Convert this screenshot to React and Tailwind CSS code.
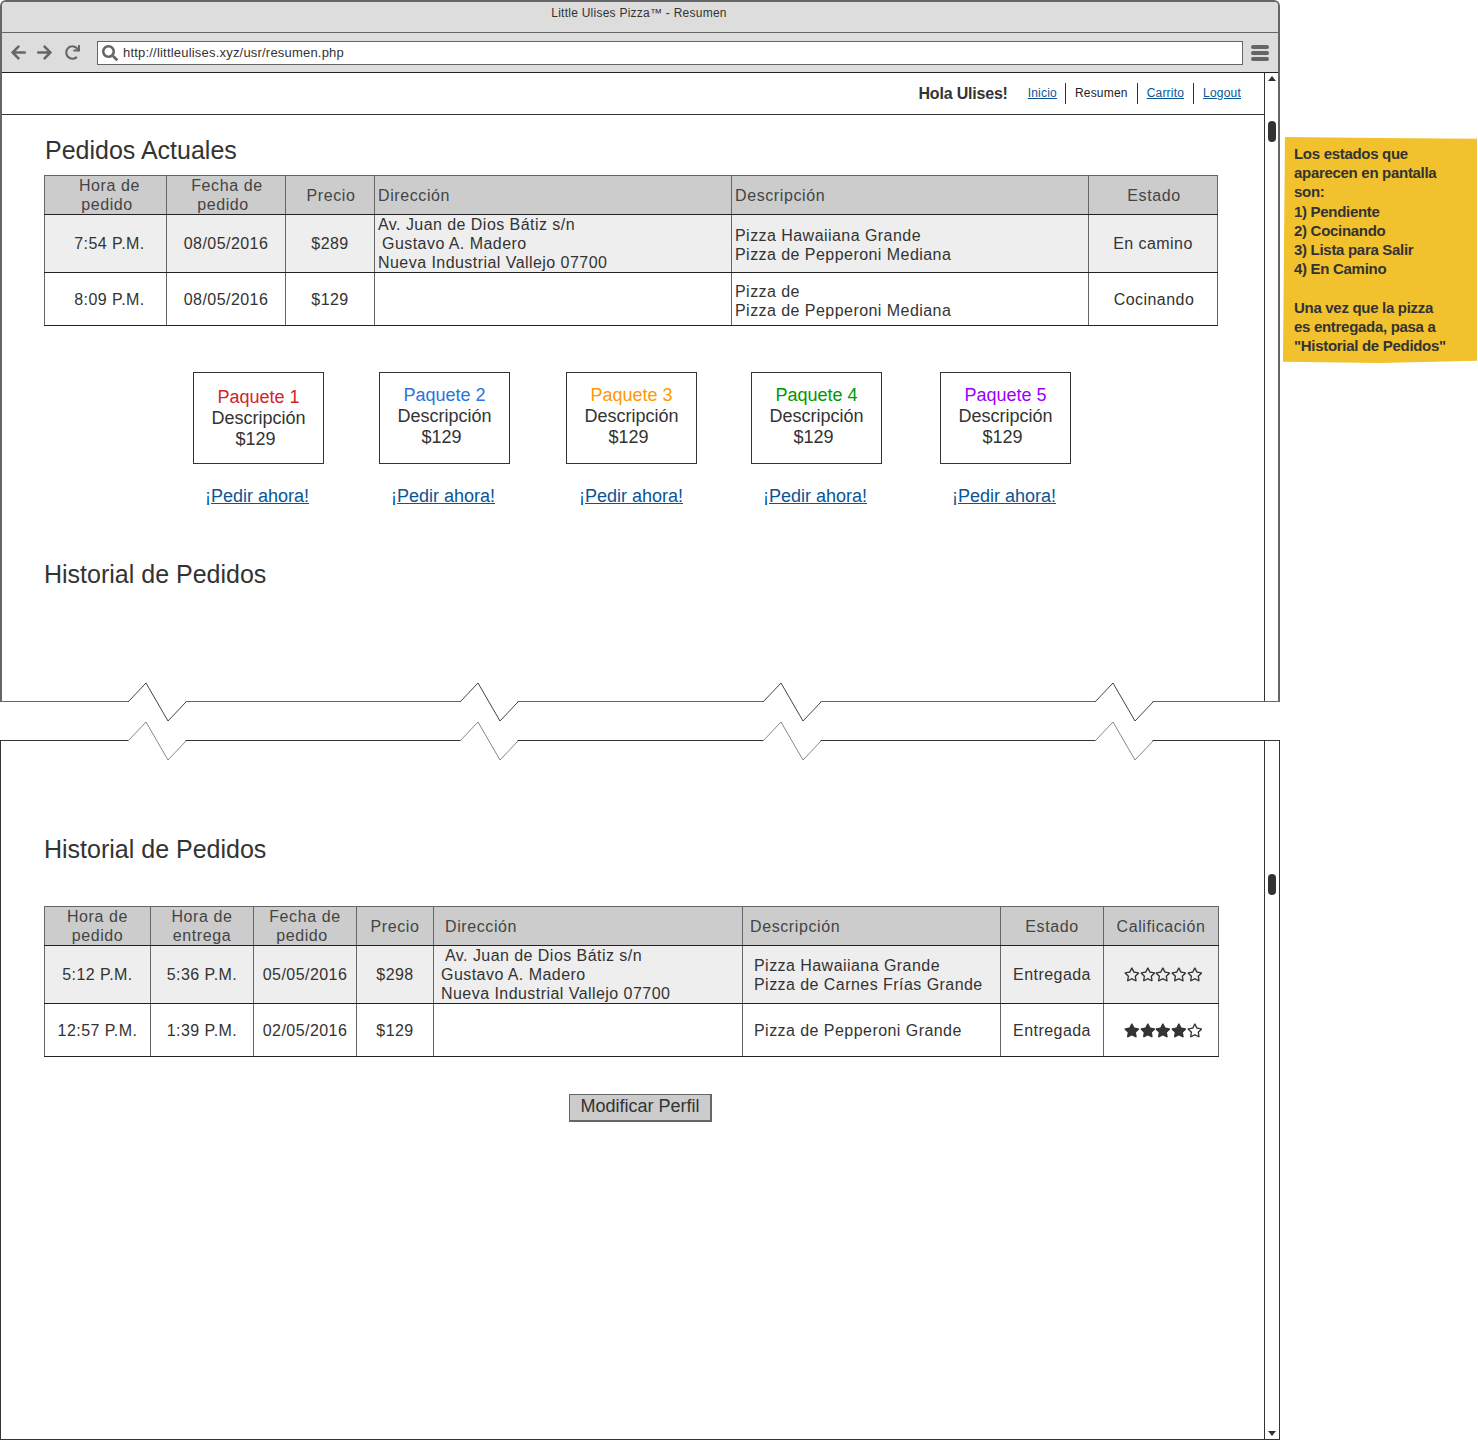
import React from "react";
import { FaArrowLeft, FaArrowRight, FaRedo, FaSearch, FaStar, FaRegStar } from "react-icons/fa";

const font = "font-['Liberation_Sans',Arial,sans-serif]";

function Th({ className = "", children }) {
  return <th className={"border border-[#666] border-b-[#222] bg-[#ccc] p-0 font-normal align-middle text-[16px] leading-[19px] tracking-[0.6px] text-[#444] " + className}>{children}</th>;
}
function Td({ className = "", children }) {
  return <td className={"border border-[#666] border-y-[#222] p-0 align-middle text-[16px] leading-[19px] tracking-[0.45px] text-[#333] " + className}>{children}</td>;
}
function Stars({ n }) {
  const list = [0, 1, 2, 3, 4];
  return (
    <div className="flex pl-[20px] text-[#333]">
      {list.map((i) => (i < n ? <FaStar key={i} className="w-[15.7px] h-[15px]" /> : <FaRegStar key={i} className="w-[15.7px] h-[15px]" />))}
    </div>
  );
}
function Pkg({ box, text, name, color, link }) {
  return (
    <div className={"flex flex-col w-[131px] " + box}>
      <div className={"h-[92px] border border-[#333] flex flex-col items-center text-[18px] leading-[21px] text-[#333] " + text}>
        <span className={color}>{name}</span>
        <span>Descripción</span>
        <span className="pr-[6px]">$129</span>
      </div>
      <a className={"mt-[22px] text-[18px] leading-[21px] underline text-[#0a5596] whitespace-nowrap " + link}>¡Pedir ahora!</a>
    </div>
  );
}
function Zig() {
  const xs = [128, 460, 763, 1095];
  return (
    <svg className="absolute left-0 top-[-21px] w-[1280px] h-[80px] pointer-events-none" viewBox="0 0 1280 80" fill="none">
      {xs.map((x) => (
        <g key={x}>
          <rect x={x + 1} y="19" width="56.5" height="4" fill="#fff" />
          <rect x={x + 1} y="58" width="56.5" height="4" fill="#fff" />
          <path d={`M${x} 21 L${x + 18} 2 L${x + 40} 40 L${x + 58} 21`} stroke="#444" strokeWidth="1" />
          <path d={`M${x} 60 L${x + 18} 41 L${x + 40} 79 L${x + 58} 60`} stroke="#888" strokeWidth="1" />
        </g>
      ))}
    </svg>
  );
}
function ScrollBar({ className, thumb, children }) {
  return (
    <div className={"w-[14px] border-l border-[#333] relative " + className}>
      <div className={"absolute left-[3px] w-[8px] h-[21px] rounded-[4px] bg-[#333] " + thumb} />
      {children}
    </div>
  );
}

export default function App() {
  return (
    <div className={"w-[1478px] h-[1440px] flex bg-white overflow-hidden " + font}>
      <div className="w-[1280px] flex flex-col relative">
        {/* top window */}
        <div className="h-[702px] flex flex-col border-2 border-b border-[#666] border-b-[#666] rounded-t-[6px] overflow-hidden">
          <div className="h-[31px] bg-[#ddd] border-b border-[#666] flex justify-center pt-[2px] pr-[2px] text-[12px] leading-[18px] tracking-[0.25px] text-[#333]">
            Little Ulises Pizza™ - Resumen
          </div>
          <div className="h-[39px] bg-[#ddd] flex items-center text-[#666] shrink-0">
            <FaArrowLeft className="ml-[8px] w-[17px] h-[17px]" />
            <FaArrowRight className="ml-[9px] w-[17px] h-[17px]" />
            <FaRedo className="ml-[12px] w-[15px] h-[15px]" />
            <div className="ml-[17px] w-[1146px] h-[24px] bg-white border border-[#666] flex items-center text-[#444]">
              <FaSearch className="ml-[4px] w-[16px] h-[16px] text-[#666]" />
              <span className="ml-[5px] text-[13px] tracking-[0.2px] text-[#333]">http://littleulises.xyz/usr/resumen.php</span>
            </div>
            <div className="ml-[8px] flex flex-col gap-[2px]">
              <span className="w-[18px] h-[4px] rounded-[2px] bg-[#666]" />
              <span className="w-[18px] h-[4px] rounded-[2px] bg-[#666]" />
              <span className="w-[18px] h-[4px] rounded-[2px] bg-[#666]" />
            </div>
          </div>
          <div className="flex-1 flex border-t border-[#222] min-h-0">
            <div className="w-[1262px] flex flex-col">
              <div className="h-[42px] shrink-0 border-b border-[#333] flex items-center justify-end pr-[23px] text-[#222]">
                <span className="font-bold text-[16px] tracking-[-0.2px] text-[#333] mr-[20px]">Hola Ulises!</span>
                <div className="flex items-center text-[12px] tracking-[0.2px] leading-[21px]">
                  <a className="underline text-[#0a5596] pr-[8px] border-r border-[#333]">Inicio</a>
                  <span className="px-[9px] border-r border-[#333]">Resumen</span>
                  <a className="underline text-[#0a5596] px-[9px] border-r border-[#333]">Carrito</a>
                  <a className="underline text-[#0a5596] pl-[9px]">Logout</a>
                </div>
              </div>
              <h1 className="ml-[43px] mt-[20px] text-[25px] leading-[30px] font-normal text-[#333]">Pedidos Actuales</h1>
              <table className="ml-[42px] mt-[10px] w-[1174px] table-fixed border-collapse">
                <colgroup>
                  <col className="w-[122px]" /><col className="w-[119px]" /><col className="w-[89px]" /><col className="w-[357px]" /><col className="w-[357px]" /><col className="w-[129px]" />
                </colgroup>
                <thead>
                  <tr className="h-[39px]">
                    <Th className="pl-[8px]">Hora de<br /><span className="pr-[5px]">pedido</span></Th>
                    <Th className="pl-[2px]">Fecha de<br /><span className="pr-[8px]">pedido</span></Th>
                    <Th className="pl-[2px]">Precio</Th>
                    <Th className="text-left pl-[3px]">Dirección</Th>
                    <Th className="text-left pl-[3px]">Descripción</Th>
                    <Th className="pl-[2px]">Estado</Th>
                  </tr>
                </thead>
                <tbody>
                  <tr className="h-[58px] bg-[#eee]">
                    <Td className="text-center pl-[8px]">7:54 P.M.</Td>
                    <Td className="text-center">08/05/2016</Td>
                    <Td className="text-center">$289</Td>
                    <Td className="pl-[3px]">Av. Juan de Dios Bátiz s/n<br /><span className="pl-[4px]">Gustavo A. Madero</span><br />Nueva Industrial Vallejo 07700</Td>
                    <Td className="pl-[3px] pt-[3px]">Pizza Hawaiiana Grande<br />Pizza de Pepperoni Mediana</Td>
                    <Td className="text-center">En camino</Td>
                  </tr>
                  <tr className="h-[53px]">
                    <Td className="text-center pl-[8px]">8:09 P.M.</Td>
                    <Td className="text-center">08/05/2016</Td>
                    <Td className="text-center">$129</Td>
                    <Td />
                    <Td className="pl-[3px] pt-[3px]">Pizza de<br />Pizza de Pepperoni Mediana</Td>
                    <Td className="text-center pl-[2px]">Cocinando</Td>
                  </tr>
                </tbody>
              </table>
              <div className="mt-[46px] ml-[191px] flex">
                <Pkg box="" text="pt-[14px]" name="Paquete 1" color="text-[#d3232a]" link="ml-[12px]" />
                <Pkg box="ml-[55px]" text="pt-[12px]" name="Paquete 2" color="text-[#2a74e0]" link="ml-[12px]" />
                <Pkg box="ml-[56px]" text="pt-[12px]" name="Paquete 3" color="text-[#ff9900]" link="ml-[13px]" />
                <Pkg box="ml-[54px]" text="pt-[12px]" name="Paquete 4" color="text-[#009900]" link="ml-[12px]" />
                <Pkg box="ml-[58px]" text="pt-[12px]" name="Paquete 5" color="text-[#9900ff]" link="ml-[12px]" />
              </div>
              <h1 className="ml-[42px] mt-[52px] text-[25px] leading-[30px] font-normal text-[#333]">Historial de Pedidos</h1>
            </div>
            <ScrollBar thumb="top-[48px]">
              <span className="absolute left-[3px] top-[3px] w-0 h-0 border-x-[4px] border-x-transparent border-b-[5px] border-b-[#333]" />
            </ScrollBar>
          </div>
        </div>

        {/* break */}
        <div className="h-[38px] relative shrink-0"><Zig /></div>

        {/* bottom window */}
        <div className="h-[700px] flex border border-[#333]">
          <div className="w-[1263px] flex flex-col">
            <h1 className="ml-[43px] mt-[93px] text-[25px] leading-[30px] font-normal text-[#333]">Historial de Pedidos</h1>
            <table className="ml-[43px] mt-[42px] w-[1174px] table-fixed border-collapse">
              <colgroup>
                <col className="w-[106px]" /><col className="w-[103px]" /><col className="w-[103px]" /><col className="w-[77px]" /><col className="w-[309px]" /><col className="w-[258px]" /><col className="w-[103px]" /><col className="w-[115px]" />
              </colgroup>
              <thead>
                <tr className="h-[39px]">
                  <Th>Hora de<br />pedido</Th>
                  <Th>Hora de<br />entrega</Th>
                  <Th>Fecha de<br /><span className="pr-[6px]">pedido</span></Th>
                  <Th>Precio</Th>
                  <Th className="text-left pl-[11px]">Dirección</Th>
                  <Th className="text-left pl-[7px]">Descripción</Th>
                  <Th>Estado</Th>
                  <Th>Calificación</Th>
                </tr>
              </thead>
              <tbody>
                <tr className="h-[58px] bg-[#eee]">
                  <Td className="text-center">5:12 P.M.</Td>
                  <Td className="text-center">5:36 P.M.</Td>
                  <Td className="text-center">05/05/2016</Td>
                  <Td className="text-center">$298</Td>
                  <Td className="pl-[7px]"><span className="pl-[4px]">Av. Juan de Dios Bátiz s/n</span><br />Gustavo A. Madero<br />Nueva Industrial Vallejo 07700</Td>
                  <Td className="pl-[11px]">Pizza Hawaiiana Grande<br />Pizza de Carnes Frías Grande</Td>
                  <Td className="text-center">Entregada</Td>
                  <Td><Stars n={0} /></Td>
                </tr>
                <tr className="h-[53px]">
                  <Td className="text-center">12:57 P.M.</Td>
                  <Td className="text-center">1:39 P.M.</Td>
                  <Td className="text-center">02/05/2016</Td>
                  <Td className="text-center">$129</Td>
                  <Td />
                  <Td className="pl-[11px]">Pizza de Pepperoni Grande</Td>
                  <Td className="text-center">Entregada</Td>
                  <Td><Stars n={4} /></Td>
                </tr>
              </tbody>
            </table>
            <button className="mt-[37px] ml-[568px] w-[143px] h-[28px] bg-[#ccc] border border-[#666] border-b-2 border-r-2 pb-[3px] text-[18px] leading-[21px] text-[#333]">Modificar Perfil</button>
          </div>
          <ScrollBar thumb="top-[133px]">
            <span className="absolute left-[3px] bottom-[3px] w-0 h-0 border-x-[4px] border-x-transparent border-t-[5px] border-t-[#333]" />
          </ScrollBar>
        </div>
      </div>

      {/* note */}
      <div className="ml-[3px] mt-[137px] w-[194px] h-[226px] shrink-0 bg-[#f2c12e] pl-[11px] pt-[7px] text-[15px] leading-[19.2px] font-bold tracking-[-0.3px] text-[#333] [clip-path:polygon(1%_0,50%_0.4%,100%_0.8%,100%_99%,50%_100%,0_99.5%)]">
        Los estados que<br />aparecen en pantalla<br />son:<br />1) Pendiente<br />2) Cocinando<br />3) Lista para Salir<br />4) En Camino<br /><br />Una vez que la pizza<br />es entregada, pasa a<br />"Historial de Pedidos"
      </div>
    </div>
  );
}
